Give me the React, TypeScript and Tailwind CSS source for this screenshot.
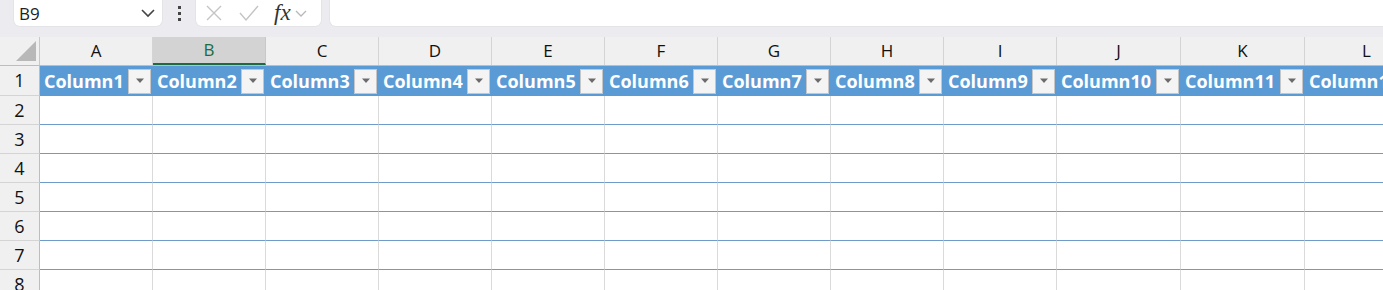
import React from 'react';

const cols = [
  { l: 'A', w: 113 }, { l: 'B', w: 113 }, { l: 'C', w: 113 }, { l: 'D', w: 113 },
  { l: 'E', w: 113 }, { l: 'F', w: 113 }, { l: 'G', w: 113 }, { l: 'H', w: 113 },
  { l: 'I', w: 113 }, { l: 'J', w: 124 }, { l: 'K', w: 124 }, { l: 'L', w: 124 },
];

const Caret = () => (
  <svg width="10" height="6" viewBox="0 0 10 6"><path d="M1 0.5h8L5 5z" fill="#6b6b6b" /></svg>
);

const App: React.FC = () => {
  const rows = [2, 3, 4, 5, 6, 7, 8];
  return (
    <div className="w-[1383px] h-[290px] overflow-hidden bg-[#f3f3f6] font-['Open_Sans','Noto_Sans',sans-serif] text-black">
      {/* formula bar */}
      <div className="h-[37px] flex items-start bg-[#ececf0]">
        <div className="ml-[13px] w-[150px] h-[27px] bg-white rounded-b-[7px] flex items-center justify-between pl-[5px] pr-[6px] border-x border-b border-[#e4e4e8]">
          <span className="text-[17px] leading-none text-[#222]">B9</span>
          <svg width="16" height="10" viewBox="0 0 16 10"><path d="M2 2l6 6 6-6" stroke="#444" strokeWidth="1.6" fill="none" /></svg>
        </div>
        <div className="w-[32px] h-[27px] flex flex-col items-center justify-center gap-[3px]">
          <span className="w-[3px] h-[3px] bg-[#444]" />
          <span className="w-[3px] h-[3px] bg-[#444]" />
          <span className="w-[3px] h-[3px] bg-[#444]" />
        </div>
        <div className="w-[127px] h-[27px] bg-white rounded-b-[7px] flex items-center border-x border-b border-[#e4e4e8]">
          <svg className="ml-[8px]" width="20" height="20" viewBox="0 0 20 20"><path d="M3 3l14 14M17 3L3 17" stroke="#c4c4c4" strokeWidth="1.4" /></svg>
          <svg className="ml-[14px]" width="22" height="20" viewBox="0 0 22 20"><path d="M2 10l6 7L20 3" stroke="#c4c4c4" strokeWidth="1.4" fill="none" /></svg>
          <span className="ml-[14px] font-['Liberation_Serif',serif] italic text-[23px] leading-[26px] text-[#333]">fx</span>
          <svg className="ml-[3px]" width="14" height="10" viewBox="0 0 14 10"><path d="M2 3l5 5 5-5" stroke="#b8b8b8" strokeWidth="1.3" fill="none" /></svg>
        </div>
        <div className="ml-[7px] flex-1 h-[27px] bg-white rounded-bl-[7px] border-l border-b border-[#e4e4e8]" />
      </div>

      {/* sheet */}
      <div className="bg-white">
        {/* column headers */}
        <div className="flex h-[29px] bg-[#f0f0f0] border-b border-[#bdbdbd]">
          <div className="w-[40px] shrink-0 border-r border-[#c8c8c8] relative">
            <svg className="absolute right-[3px] bottom-[4px]" width="20" height="20" viewBox="0 0 20 20"><path d="M20 0v20H0z" fill="#b8b8b8" /></svg>
          </div>
          {cols.map((c) => (
            <div
              key={c.l}
              style={{ width: c.w }}
              className={
                c.l === 'B'
                  ? 'shrink-0 flex items-center justify-center bg-[#d3d3d3] border-r border-[#c8c8c8] border-b-2 border-b-[#1d6b40] text-[#1d6b40] text-[17px]'
                  : 'shrink-0 flex items-center justify-center border-r border-[#d4d4d4] text-[17px] text-[#111]'
              }
            >
              {c.l}
            </div>
          ))}
        </div>
        {/* row 1: table header */}
        <div className="flex h-[30px]">
          <div className="w-[40px] shrink-0 bg-[#f0f0f0] border-r border-[#bdbdbd] border-b border-b-[#d4d4d4] flex items-center justify-center text-[18px] text-[#111]">1</div>
          {cols.map((c, i) => (
            <div key={c.l} style={{ width: c.w }} className="shrink-0 bg-[#5b9bd5] flex items-center justify-between pl-[4px] pr-[2px] overflow-hidden">
              <span className="text-white font-bold text-[18px] leading-none whitespace-nowrap">Column{i + 1}</span>
              {i < 11 && (
                <div className="w-[23px] h-[25px] shrink-0 bg-[#f4f4f4] border border-[#c6c6c6] flex items-center justify-center">
                  <Caret />
                </div>
              )}
            </div>
          ))}
        </div>
        {rows.map((r) => (
          <div key={r} className="flex h-[29px]">
            <div className="w-[40px] shrink-0 bg-[#f0f0f0] border-r border-[#bdbdbd] border-b border-b-[#d4d4d4] flex items-center justify-center text-[18px] text-[#111]">{r}</div>
            {cols.map((c) => (
              <div key={c.l} style={{ width: c.w }} className="shrink-0 border-r border-[#dadada] border-b border-b-[#6f9bc8]" />
            ))}
          </div>
        ))}
      </div>
    </div>
  );
};

export default App;
